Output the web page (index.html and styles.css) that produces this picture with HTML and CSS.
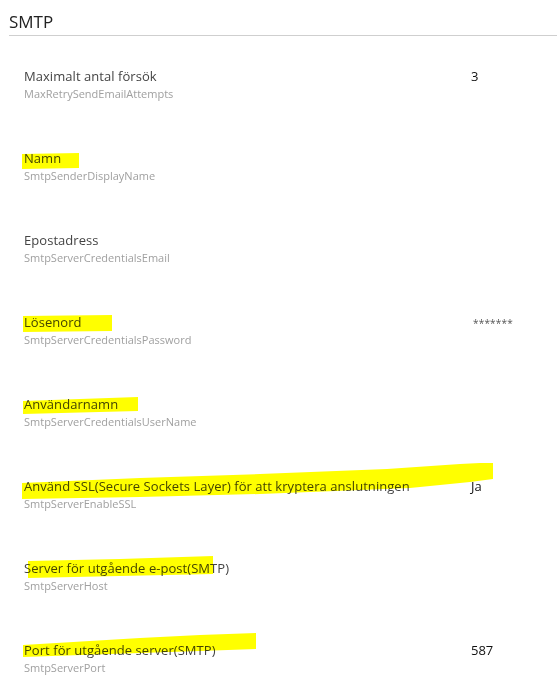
FILE: index.html
```html
<!DOCTYPE html>
<html lang="sv">
<head>
<meta charset="utf-8">
<title>SMTP</title>
<link rel="stylesheet" href="styles.css">
</head>
<body>
<div class="page">
  <h1 class="title">SMTP</h1>
  <div class="list">
    <div class="row">
      <div class="info"><div class="label">Maximalt antal försök</div><div class="key">MaxRetrySendEmailAttempts</div></div>
      <div class="value">3</div>
    </div>
    <div class="row">
      <svg class="hl" width="557" height="60" viewBox="0 0 557 60"><polygon points="22,24 79,23 79,38 22,39"/></svg>
      <div class="info"><div class="label">Namn</div><div class="key">SmtpSenderDisplayName</div></div>
      <div class="value"></div>
    </div>
    <div class="row">
      <div class="info"><div class="label">Epostadress</div><div class="key">SmtpServerCredentialsEmail</div></div>
      <div class="value"></div>
    </div>
    <div class="row">
      <svg class="hl" width="557" height="60" viewBox="0 0 557 60"><polygon points="23,22 112,21 112,37 23,38"/></svg>
      <div class="info"><div class="label">Lösenord</div><div class="key">SmtpServerCredentialsPassword</div></div>
      <div class="value"><span class="mask">*******</span></div>
    </div>
    <div class="row">
      <svg class="hl" width="557" height="60" viewBox="0 0 557 60"><polygon points="23,25 80,23 138,21 138,35 23,38"/></svg>
      <div class="info"><div class="label">Användarnamn</div><div class="key">SmtpServerCredentialsUserName</div></div>
      <div class="value"></div>
    </div>
    <div class="row">
      <svg class="hl" width="557" height="60" viewBox="0 0 557 60"><polygon points="22,25 140,20 260,16 387,11 460,6 480,5 493,5 493,21 470,24 410,30 260,36 140,39 22,41"/></svg>
      <div class="info"><div class="label">Använd SSL(Secure Sockets Layer) för att kryptera anslutningen</div><div class="key">SmtpServerEnableSSL</div></div>
      <div class="value">Ja</div>
    </div>
    <div class="row">
      <svg class="hl" width="557" height="60" viewBox="0 0 557 60"><polygon points="28,21 120,19 213,16 213,34 120,36 28,38"/></svg>
      <div class="info"><div class="label">Server för utgående e-post(SMTP)</div><div class="key">SmtpServerHost</div></div>
      <div class="value"></div>
    </div>
    <div class="row">
      <svg class="hl" width="557" height="60" viewBox="0 0 557 60"><polygon points="23,23 140,16 200,13 256,11 256,27 200,29 140,31 23,35"/></svg>
      <div class="info"><div class="label">Port för utgående server(SMTP)</div><div class="key">SmtpServerPort</div></div>
      <div class="value">587</div>
    </div>
  </div>
</div>
</body>
</html>
```
FILE: styles.css
```css
html, body {
  margin: 0;
  padding: 0;
  background: #ffffff;
}
body {
  font-family: "Open Sans", "Noto Sans", "Liberation Sans", sans-serif;
  color: #333;
}
.page {
  width: 557px;
}
.title {
  margin: 0 0 0 9px;
  padding: 10px 0 1px 0;
  font-size: 17px;
  font-weight: 400;
  line-height: 24px;
  color: #222;
  border-bottom: 1px solid #cfcfcf;
}
.list {
  display: flex;
  flex-direction: column;
  gap: 46px;
  padding: 31px 0 0 24px;
}
.row {
  position: relative;
  display: grid;
  grid-template-columns: 447px 1fr;
  height: 36px;
}
.label {
  font-size: 13px;
  line-height: 18px;
  color: #444;
  white-space: nowrap;
  position: relative;
  letter-spacing: 0.05px;
}
.key {
  font-size: 11px;
  line-height: 18px;
  color: #a0a0a0;
  white-space: nowrap;
}
.value {
  font-size: 13px;
  line-height: 18px;
  color: #111;
}
.mask {
  display: inline-block;
  padding: 0 0 0 2px;
  font-size: 10px;
  letter-spacing: 0.2px;
  color: #555;
}
.hl {
  position: absolute;
  left: -24px;
  top: -19px;
  z-index: 2;
  mix-blend-mode: multiply;
  pointer-events: none;
}
.hl polygon {
  fill: #ffff00;
}
```
